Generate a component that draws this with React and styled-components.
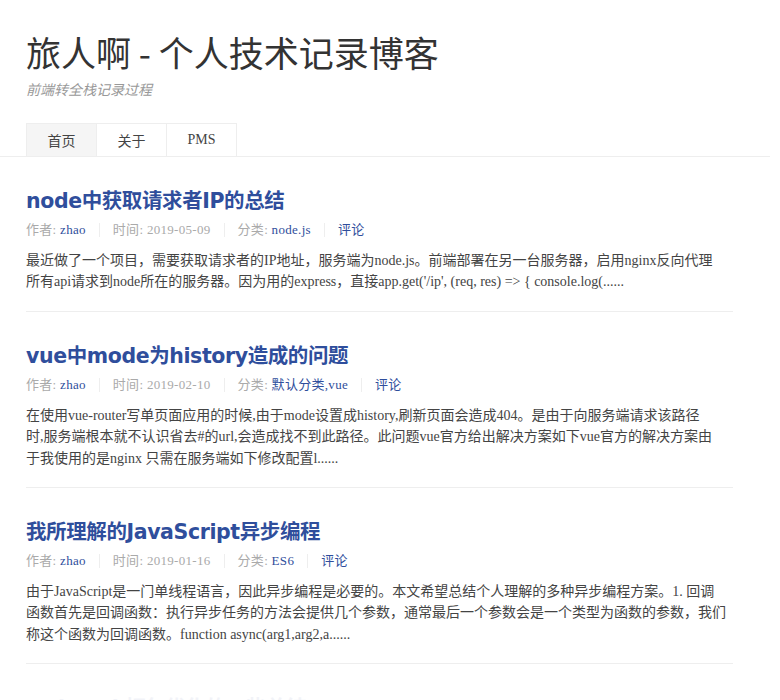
import React from 'react';
import styled, { createGlobalStyle } from 'styled-components';

const posts = [
    {
        title: 'node中获取请求者IP的总结',
        date: '2019-05-09',
        cats: ['node.js'],
        excerpt: [
            '最近做了一个项目，需要获取请求者的IP地址，服务端为node.js。前端部署在另一台服务器，启用nginx反向代理',
            "所有api请求到node所在的服务器。因为用的express，直接app.get('/ip', (req, res) => { console.log(......",
        ],
    },
    {
        title: 'vue中mode为history造成的问题',
        date: '2019-02-10',
        cats: ['默认分类', 'vue'],
        excerpt: [
            '在使用vue-router写单页面应用的时候,由于mode设置成history,刷新页面会造成404。是由于向服务端请求该路径',
            '时,服务端根本就不认识省去#的url,会造成找不到此路径。此问题vue官方给出解决方案如下vue官方的解决方案由',
            '于我使用的是nginx 只需在服务端如下修改配置l......',
        ],
    },
    {
        title: '我所理解的JavaScript异步编程',
        date: '2019-01-16',
        cats: ['ES6'],
        excerpt: [
            '由于JavaScript是一门单线程语言，因此异步编程是必要的。本文希望总结个人理解的多种异步编程方案。1. 回调',
            '函数首先是回调函数：执行异步任务的方法会提供几个参数，通常最后一个参数会是一个类型为函数的参数，我们',
            '称这个函数为回调函数。function async(arg1,arg2,a......',
        ],
    },
];

const App = () => {
    return (
        <>
            <GlobalStyle />
            <Header>
                <SiteTitle>旅人啊 - 个人技术记录博客</SiteTitle>
                <SiteDesc>前端转全栈记录过程</SiteDesc>
                <Nav>
                    <NavItem active>首页</NavItem>
                    <NavItem>关于</NavItem>
                    <NavItem>PMS</NavItem>
                </Nav>
            </Header>

            <Main>
                {posts.map((post) => (
                    <Post key={post.title}>
                        <PostTitle>{post.title}</PostTitle>
                        <Meta>
                            <MetaItem>
                                作者: <Link>zhao</Link>
                            </MetaItem>
                            <MetaItem>时间: {post.date}</MetaItem>
                            <MetaItem>
                                分类: <Link>{post.cats.join(',')}</Link>
                            </MetaItem>
                            <MetaItem>
                                <Link>评论</Link>
                            </MetaItem>
                        </Meta>
                        <Excerpt>
                            {post.excerpt.map((line) => (
                                <Line key={line}>{line}</Line>
                            ))}
                        </Excerpt>
                    </Post>
                ))}
                <Post fading>
                    <PostTitle>webpack打包优化的一些总结</PostTitle>
                </Post>
            </Main>
        </>
    );
};

// Styled component

const GlobalStyle = createGlobalStyle`
    html, body {
        margin: 0;
        padding: 0;
        background: #fff;
    }

    body {
        width: 770px;
        font-family: "Liberation Serif", "Noto Sans CJK SC", serif;
        color: #444;
        overflow: hidden;
    }
`;

const Header = styled.header`
    padding: 30px 0 0 26px;
    border-bottom: 1px solid #eee;
`;

const SiteTitle = styled.h1`
    margin: 0;
    font-family: "Noto Sans CJK SC", sans-serif;
    font-weight: 400;
    font-size: 35px;
    line-height: 44px;
    color: #333;
`;

const SiteDesc = styled.p`
    margin: 5px 0 0;
    font-family: "Noto Sans CJK SC", sans-serif;
    font-style: italic;
    font-size: 14px;
    line-height: 20px;
    color: #999;
`;

const Nav = styled.nav`
    display: flex;
    margin-top: 24px;
`;

const NavItem = styled.a`
    width: 69px;
    height: 32px;
    display: flex;
    align-items: center;
    justify-content: center;
    font-size: 14px;
    color: #444;
    background: ${(p) => (p.active ? '#f5f5f5' : '#fff')};
    border: 1px solid #eee;
    border-bottom: none;
    border-left: ${(p) => (p.active ? '1px solid #eee' : 'none')};
`;

const Main = styled.main`
    height: 544px;
    overflow: hidden;
    padding: 0 37px 0 26px;
`;

const Post = styled.article`
    padding: 29px 0 18px;
    border-bottom: 1px solid #eee;
    opacity: ${(p) => (p.fading ? 0.06 : 1)};
`;

const PostTitle = styled.h2`
    margin: 0;
    font-family: "DejaVu Sans", "Noto Sans CJK SC", sans-serif;
    font-weight: 700;
    font-size: 20.5px;
    line-height: 30px;
    color: #2f4e9c;
    letter-spacing: -0.4px;
`;

const Meta = styled.div`
    display: flex;
    align-items: center;
    height: 28px;
    font-size: 13px;
    color: #aaa;
    letter-spacing: 0.3px;
`;

const MetaItem = styled.span`
    padding: 0 13px;
    line-height: 14px;
    border-left: 1px solid #eee;

    &:first-child {
        padding-left: 0;
        border-left: none;
    }
`;

const Link = styled.a`
    color: #2f4e9c;
`;

const Excerpt = styled.p`
    margin: 6px 0 0;
    font-size: 14px;
    line-height: 21.4px;
    color: #444;
`;

const Line = styled.span`
    display: block;
    white-space: nowrap;
`;

export default App;
